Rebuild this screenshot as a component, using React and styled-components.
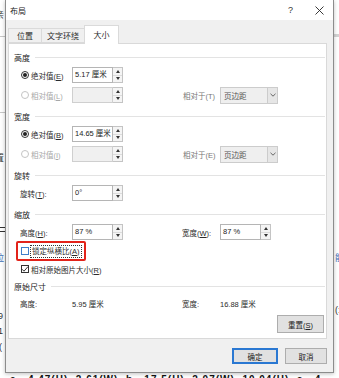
import React from 'react';
import styled, {createGlobalStyle} from "styled-components";

const FONT = `"Liberation Sans", "Noto Sans CJK SC", sans-serif`;

const GlobalStyle = createGlobalStyle`
    html, body {
        margin: 0;
        padding: 0;
    }
    body {
        width: 339px;
        height: 378px;
        overflow: hidden;
        background: #fff;
        font-family: ${FONT};
        text-autospace: no-autospace;
    }
`;

// document scraps peeking out from behind the dialog
const scraps = [
    {top: 9, left: -5, text: '亲', color: '#333'},
    {top: 152, left: -5, text: '置', color: '#333'},
    {top: 252, left: -5, text: '拉', color: '#3d6fb6'},
    {top: 310, left: -2, text: '9', color: '#333'},
    {top: 325, left: -2, text: '1', color: '#333'},
    {top: 341, left: -1, text: '(', color: '#333'},
    {top: 252, left: 335, text: '能', color: '#3d6fb6'},
    {top: 304, left: 335, text: '(:', color: '#333'},
];

const App = () => {
    return (
        <Page>
            <GlobalStyle/>
            <Document>
                {scraps.map((s, i) => (
                    <Scrap key={i} style={{top: s.top, left: s.left, color: s.color}}>{s.text}</Scrap>
                ))}
                <LeftRule style={{top: 36}}/>
                <LeftRule style={{top: 112}}/>
                <LeftRule style={{top: 227}} $dark/>
                <LeftRule style={{top: 231}} $dark/>
                <RightRule/>
                <BottomLine>
                    a.&nbsp;&nbsp;4.47(H)&nbsp;&nbsp;2.61(W)&nbsp;&nbsp;b.&nbsp;&nbsp;17.5(H)&nbsp;&nbsp;2.07(W)&nbsp;&nbsp;10.04(H)&nbsp;&nbsp;c.&nbsp;&nbsp;4
                </BottomLine>
            </Document>

            <Dialog>
                <TitleBar>
                    <Title>布局</Title>
                    <TitleButtons>
                        <Help>?</Help>
                        <svg width="9" height="9" viewBox="0 0 9 9">
                            <path d="M0.5 0.5 L8.5 8.5 M8.5 0.5 L0.5 8.5" stroke="#222" strokeWidth="0.9"/>
                        </svg>
                    </TitleButtons>
                </TitleBar>

                <Body>
                    <Tabs>
                        <Tab $w={34}>位置</Tab>
                        <Tab $w={44}>文字环绕</Tab>
                        <Tab $w={35} $active>大小</Tab>
                    </Tabs>

                    <Panel>
                        <Group $gap={0}>
                            <GroupTitle>高度</GroupTitle>
                            <Row>
                                <Lead><Radio $checked/><span>绝对值(<u>E</u>)</span></Lead>
                                <SpinField value="5.17 厘米"/>
                            </Row>
                            <Row>
                                <Lead $disabled><Radio $disabled/><span>相对值(<u>L</u>)</span></Lead>
                                <SpinField value="" disabled/>
                                <span/>
                                <SideLabel $disabled>相对于(T)</SideLabel>
                                <Select>
                                    <span>页边距</span>
                                    <Chevron/>
                                </Select>
                            </Row>
                        </Group>

                        <Group>
                            <GroupTitle>宽度</GroupTitle>
                            <Row>
                                <Lead><Radio $checked/><span>绝对值(<u>B</u>)</span></Lead>
                                <SpinField value="14.65 厘米"/>
                            </Row>
                            <Row>
                                <Lead $disabled><Radio $disabled/><span>相对值(<u>I</u>)</span></Lead>
                                <SpinField value="" disabled/>
                                <span/>
                                <SideLabel $disabled>相对于(E)</SideLabel>
                                <Select>
                                    <span>页边距</span>
                                    <Chevron/>
                                </Select>
                            </Row>
                        </Group>

                        <Group>
                            <GroupTitle>旋转</GroupTitle>
                            <Row>
                                <Lead $plain><span>旋转(<u>T</u>):</span></Lead>
                                <SpinField value="0°"/>
                            </Row>
                        </Group>

                        <Group>
                            <GroupTitle>缩放</GroupTitle>
                            <Row>
                                <Lead $plain><span>高度(<u>H</u>):</span></Lead>
                                <SpinField value="87 %"/>
                                <span/>
                                <SideLabel>宽度(<u>W</u>):</SideLabel>
                                <SpinField value="87 %"/>
                            </Row>
                            <CheckRow>
                                <CheckBox $focus/>
                                <FocusLabel>锁定纵横比(<u>A</u>)</FocusLabel>
                                <Highlight/>
                            </CheckRow>
                            <CheckRow>
                                <CheckBox $checked>
                                    <svg width="8" height="8" viewBox="0 0 8 8">
                                        <path d="M1 4.2 L3 6.2 L7 1.6" fill="none" stroke="#222" strokeWidth="0.9"/>
                                    </svg>
                                </CheckBox>
                                <span>相对原始图片大小(<u>R</u>)</span>
                            </CheckRow>
                        </Group>

                        <Group $gap={0}>
                            <GroupTitle>原始尺寸</GroupTitle>
                            <Row $h={18}>
                                <Lead $plain><span>高度:</span></Lead>
                                <Value>5.95 厘米</Value>
                                <span/>
                                <SideLabel>宽度:</SideLabel>
                                <Value>16.88 厘米</Value>
                            </Row>
                        </Group>

                        <ResetBar>
                            <Button $w={47} $h={18}><span>重置(<u>S</u>)</span></Button>
                        </ResetBar>
                    </Panel>

                    <Footer>
                        <Button $w={46} $h={16} $primary>确定</Button>
                        <Button $w={42} $h={16}>取消</Button>
                    </Footer>
                </Body>
            </Dialog>
        </Page>
    )
}

const SpinField = ({value, disabled}) => (
    <Field>
        <TextBox $disabled={disabled}>{value}</TextBox>
        <Spinner>
            <SpinButton><Arrow $up/></SpinButton>
            <SpinButton><Arrow/></SpinButton>
        </Spinner>
    </Field>
);

const Chevron = () => (
    <DropButton>
        <svg width="6" height="4" viewBox="0 0 6 4">
            <path d="M0.5 0.8 L3 3.2 L5.5 0.8" fill="none" stroke="#444" strokeWidth="0.8"/>
        </svg>
    </DropButton>
);

export default App;

const Page = styled.div `
    position: relative;
    width: 339px;
    height: 378px;
    overflow: hidden;
    background: #fff;
    font-size: 7.5px;
    color: #2b2b2b;
`;
const Document = styled.div `
    position: absolute;
    inset: 0;
`;
const Scrap = styled.span `
    position: absolute;
    font-size: 9px;
    line-height: 12px;
`;
const LeftRule = styled.div `
    position: absolute;
    left: 0;
    width: 5px;
    height: 1px;
    background: ${props => props.$dark ? '#333' : '#c8c8c8'};
`;
const RightRule = styled.div `
    position: absolute;
    left: 334px;
    top: 34px;
    width: 5px;
    height: 3px;
    background: #d4d4d4;
`;
const BottomLine = styled.div `
    position: absolute;
    left: 10px;
    top: 374px;
    font-size: 10px;
    line-height: 12px;
    font-weight: bold;
    white-space: nowrap;
    color: #111;
    letter-spacing: 1px;
`;

const Dialog = styled.div `
    position: absolute;
    left: 5px;
    top: 0;
    width: 327px;
    height: 372px;
    border: 1px solid #8c8c8c;
    border-top: none;
    background: #f0f0f0;
    box-shadow: 0 1px 4px rgba(0, 0, 0, 0.25);
    display: flex;
    flex-direction: column;
`;
const TitleBar = styled.div `
    height: 20px;
    background: #fff;
    display: flex;
    align-items: center;
    justify-content: space-between;
    padding: 0 9px 0 4px;
`;
const Title = styled.span `
    font-size: 8px;
    color: #222;
`;
const TitleButtons = styled.div `
    display: flex;
    align-items: center;
    gap: 22px;
`;
const Help = styled.span `
    font-size: 9px;
    color: #333;
`;
const Body = styled.div `
    flex: 1;
    display: flex;
    flex-direction: column;
    padding: 0 6px 0 2px;
`;
const Tabs = styled.div `
    height: 23px;
    display: flex;
    align-items: flex-end;
    position: relative;
    z-index: 1;
`;
const Tab = styled.div `
    width: ${props => props.$w}px;
    height: ${props => props.$active ? 19 : 15}px;
    margin-bottom: ${props => props.$active ? -1 : 0}px;
    box-sizing: border-box;
    display: flex;
    align-items: center;
    justify-content: center;
    padding-bottom: ${props => props.$active ? 2 : 0}px;
    background: ${props => props.$active ? '#fff' : '#f0f0f0'};
    border: 1px solid #dadada;
    border-bottom: ${props => props.$active ? 'none' : '1px solid #dadada'};
    margin-left: -1px;
    font-size: 8px;
    &:first-child { margin-left: 0; }
`;
const Panel = styled.div `
    height: 296px;
    box-sizing: border-box;
    background: #fff;
    border: 1px solid #d9d9d9;
    padding: 5px 1px 0 5px;
    display: flex;
    flex-direction: column;
`;
const Group = styled.section `
    margin-top: ${props => props.$gap ?? 3}px;
`;
const GroupTitle = styled.div `
    height: 16px;
    display: flex;
    align-items: center;
    gap: 5px;
    color: #222;
    font-size: 8px;
    &::after {
        content: "";
        flex: 1;
        height: 1px;
        background: #e3e3e3;
    }
`;
const Row = styled.div `
    height: ${props => props.$h || 20}px;
    display: grid;
    grid-template-columns: 52px 52px 58px 38px auto;
    align-items: center;
    padding-left: 6px;
    white-space: nowrap;
`;
const Lead = styled.div `
    display: flex;
    align-items: center;
    gap: 2px;
    color: ${props => props.$disabled ? '#a8a8a8' : '#2b2b2b'};
    padding-left: ${props => props.$plain ? 0 : 1}px;
`;
const SideLabel = styled.div `
    color: ${props => props.$disabled ? '#777' : '#2b2b2b'};
    padding-left: ${props => props.$disabled ? 1 : 0}px;
`;
const Radio = styled.span `
    width: 8px;
    height: 8px;
    box-sizing: border-box;
    border-radius: 50%;
    border: 1px solid ${props => props.$disabled ? '#c4c4c4' : '#333'};
    background: #fff;
    display: inline-flex;
    align-items: center;
    justify-content: center;
    &::after {
        content: "";
        width: 4px;
        height: 4px;
        border-radius: 50%;
        background: ${props => props.$checked ? '#222' : 'transparent'};
    }
`;
const Field = styled.div `
    display: flex;
    height: 16px;
`;
const TextBox = styled.div `
    width: 41px;
    box-sizing: border-box;
    border: 1px solid ${props => props.$disabled ? '#cfcfcf' : '#b5b5b5'};
    background: ${props => props.$disabled ? '#f0f0f0' : '#fff'};
    padding-left: 2px;
    line-height: 14px;
    color: #222;
    overflow: hidden;
    white-space: nowrap;
`;
const Spinner = styled.div `
    width: 10px;
    display: flex;
    flex-direction: column;
    border: 1px solid #c4c4c4;
    border-left: none;
    box-sizing: border-box;
`;
const SpinButton = styled.div `
    flex: 1;
    display: flex;
    align-items: center;
    justify-content: center;
    background: #f4f4f4;
    &:first-child { border-bottom: 1px solid #dcdcdc; }
`;
const Arrow = styled.span `
    width: 0;
    height: 0;
    border-left: 2px solid transparent;
    border-right: 2px solid transparent;
    ${props => props.$up ? 'border-bottom: 3px solid #333;' : 'border-top: 3px solid #333;'}
`;
const Select = styled.div `
    width: 58px;
    height: 17px;
    box-sizing: border-box;
    border: 1px solid #cccccc;
    background: #efefef;
    display: flex;
    align-items: center;
    justify-content: space-between;
    padding-left: 3px;
    color: #555;
`;
const DropButton = styled.span `
    width: 10px;
    height: 15px;
    box-sizing: border-box;
    border-left: 1px solid #cccccc;
    background: #e6e6e6;
    display: flex;
    align-items: center;
    justify-content: center;
`;
const CheckRow = styled.div `
    position: relative;
    height: 18px;
    display: flex;
    align-items: center;
    gap: 2px;
    padding-left: 7px;
    white-space: nowrap;
`;
const CheckBox = styled.span `
    width: 8px;
    height: 8px;
    box-sizing: border-box;
    border: 1px solid ${props => props.$focus ? '#3f7fc9' : '#333'};
    background: #fff;
    display: inline-flex;
    align-items: center;
    justify-content: center;
    svg { margin: -1px; }
`;
const FocusLabel = styled.span `
    outline: 1px dotted #333;
    outline-offset: 0;
    padding: 0 1px;
    line-height: 11px;
`;
const Highlight = styled.span `
    position: absolute;
    left: 2px;
    top: -1px;
    width: 70px;
    height: 20px;
    box-sizing: border-box;
    border: 2px solid #e2231a;
    border-radius: 2px;
`;
const Value = styled.div `
    color: #2b2b2b;
`;
const ResetBar = styled.div `
    margin-top: 3px;
    display: flex;
    justify-content: flex-end;
    padding-right: 1px;
`;
const Button = styled.div `
    width: ${props => props.$w}px;
    height: ${props => props.$h}px;
    box-sizing: border-box;
    border: 1px solid ${props => props.$primary ? '#2a78d2' : '#adadad'};
    box-shadow: ${props => props.$primary ? 'inset 0 0 0 1px #2a78d2' : 'none'};
    background: #e1e1e1;
    display: flex;
    align-items: center;
    justify-content: center;
    color: #222;
`;
const Footer = styled.div `
    display: flex;
    justify-content: flex-end;
    gap: 7px;
    padding-top: 9px;
`;
